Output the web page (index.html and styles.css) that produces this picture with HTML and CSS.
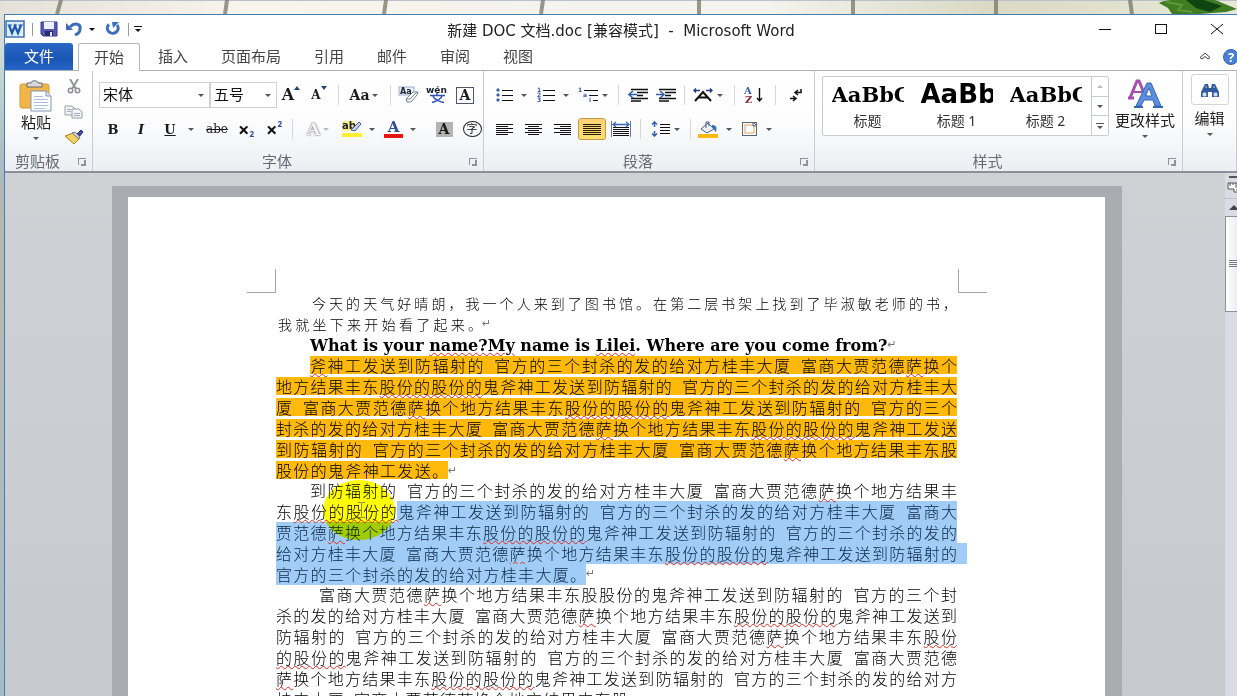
FILE: index.html
```html
<!DOCTYPE html>
<html lang="zh-CN">
<head>
<meta charset="utf-8">
<title>新建 DOC 文档.doc [兼容模式] - Microsoft Word</title>
<link rel="stylesheet" href="styles.css">
</head>
<body>
<div class="wallpaper">
  <svg class="wall-art" viewBox="0 0 1237 14" preserveAspectRatio="none" aria-hidden="true">
    <defs><linearGradient id="wall"><stop offset="0" stop-color="#e4e1d8"/><stop offset=".2" stop-color="#f8f4ee"/><stop offset=".62" stop-color="#f4f3ee"/><stop offset=".8" stop-color="#d9d9c4"/><stop offset="1" stop-color="#e8e8d8"/></linearGradient></defs>
    <rect width="1237" height="14" fill="url(#wall)"/>
    <rect width="1237" height="1" fill="#b9c0cc"/>
    <path d="M61 0L57 14M227 0L225 14M386 0L384 14M543 0L541 14M699 0V14M853 0V14M996 0V14M1130 0L1132 14" stroke="#78776a" stroke-width="4" opacity=".75"/>
    <path d="M1159 3C1166 -2 1215 -3 1220 2L1237 9L1226 12L1200 14H1172L1168 8Z" fill="#3f7d22"/>
    <path d="M1186 0H1204L1222 6L1210 12L1196 8Z" fill="#0f4410"/>
    <path d="M1166 2L1182 5L1178 10L1192 12" stroke="#5f9638" stroke-width="2" fill="none"/>
  </svg>
</div>
<div class="window">
  <header class="titlebar">
    <div class="quick">
      <svg width="20" height="18" viewBox="0 0 20 18" aria-hidden="true"><rect x="1" y="1" width="18" height="16" fill="#dcefff" stroke="#3f6fb0" stroke-width="1.5"/><path d="M4 5L7 13L10 6L13 13L16 5" fill="none" stroke="#1c56a8" stroke-width="2.2"/><path d="M2.500 5H7M8.500 5H12M13.500 5H18" stroke="#1c56a8"/></svg>
      <i class="qsep"></i>
      <button aria-label="保存"><svg width="18" height="16" viewBox="0 0 18 16"><path d="M1 1H17V15H3L1 13Z" fill="#5557b4" stroke="#353894"/><rect x="4" y="1" width="10" height="7" fill="#eef1ff"/><rect x="5" y="10" width="8" height="5" fill="#272b68"/><rect x="10" y="11" width="2" height="4" fill="#dfe4ff"/></svg></button>
      <button class="undo" aria-label="撤消"><svg width="16" height="14" viewBox="0 0 16 14"><path d="M4 5C9 0 15 2 14 7C14 10 12 12 9 13" fill="none" stroke="#3c6dbd" stroke-width="3"/><path d="M0 1V8H7Z" fill="#3c6dbd"/></svg><i class="caret dark"></i></button>
      <button aria-label="重复"><svg width="16" height="14" viewBox="0 0 16 14"><path d="M4 2.500A5.500 5 0 1 0 12 3" fill="none" stroke="#3c6dbd" stroke-width="3"/><path d="M7 0H14L8 6Z" fill="#3c6dbd"/></svg></button>
      <i class="qsep"></i>
      <button class="custom" aria-label="自定义快速访问工具栏"><i class="caret dark"></i></button>
    </div>
    <h1>新建 DOC 文档.doc [兼容模式] &nbsp;- &nbsp;Microsoft Word</h1>
    <div class="winbtns">
      <button aria-label="最小化"><svg width="14" height="14" viewBox="0 0 14 14"><path d="M1 7.500H13" stroke="#111"/></svg></button>
      <button aria-label="最大化"><svg width="14" height="14" viewBox="0 0 14 14"><rect x="1.500" y="2.500" width="11" height="9" fill="none" stroke="#111"/></svg></button>
      <button aria-label="关闭"><svg width="14" height="14" viewBox="0 0 14 14"><path d="M1 2L13 12M13 2L1 12" stroke="#111"/></svg></button>
    </div>
  </header>

  <nav class="tabs">
    <button class="file">文件</button>
    <button class="tab active">开始</button>
    <button class="tab">插入</button>
    <button class="tab">页面布局</button>
    <button class="tab">引用</button>
    <button class="tab">邮件</button>
    <button class="tab">审阅</button>
    <button class="tab">视图</button>
    <span class="tabs-right">
      <button aria-label="功能区最小化"><svg width="12" height="8" viewBox="0 0 12 8"><path d="M1 5.500L6 1L11 5.500L9 7L6 4.500L3 7Z" fill="#fff" stroke="#444"/></svg></button>
      <button class="help" aria-label="帮助">?</button>
    </span>
  </nav>

  <div class="ribbon">
    <section class="group clip">
      <div class="clip-body">
        <button class="paste">
          <svg width="34" height="32" viewBox="0 0 34 32" aria-hidden="true"><rect x="1" y="4" width="29" height="24" rx="2" fill="#f0b64c" stroke="#d9973a"/><path d="M8 7V3H12C12 0 19 0 19 3H23V7Z" fill="#d7d9dc" stroke="#66686c"/><path d="M12 11H27L32 16V31H12Z" fill="#fff" stroke="#7f93b4"/><path d="M27 11V16H32" fill="#dfe8f6" stroke="#7f93b4"/><path d="M15 16.500H24M15 19.500H29M15 22.500H29M15 25.500H29M15 28.500H26" stroke="#a9bedd"/></svg>
          <span>粘贴</span><i class="caret"></i>
        </button>
        <div class="clip-side">
          <button aria-label="剪切"><svg width="14" height="15" viewBox="0 0 14 15"><path d="M3 0L9 10M11 0L5 10" stroke="#8c8f94" stroke-width="1.800"/><circle cx="3.500" cy="11.500" r="2.200" fill="none" stroke="#8c8f94" stroke-width="1.500"/><circle cx="10.500" cy="11.500" r="2.200" fill="none" stroke="#8c8f94" stroke-width="1.500"/></svg></button>
          <button aria-label="复制"><svg width="20" height="14" viewBox="0 0 20 14"><path d="M1 1H8L11 4V10H1Z" fill="#f2f3f6" stroke="#9b9fa8"/><path d="M8 4H15L18 7V13H8Z" fill="#f2f3f6" stroke="#9b9fa8"/><path d="M3 4.500H7M3 6.500H7M10 8.500H16M10 10.500H16" stroke="#a7adba"/></svg></button>
          <button aria-label="格式刷"><svg width="20" height="16" viewBox="0 0 20 16"><path d="M12 6L17 1L19 3L15 8Z" fill="#3e4c9a" stroke="#30336b"/><path d="M1 7L9 4L15 10L10 15Z" fill="#f3d160" stroke="#a98325"/><path d="M8 4L11 3L16 8L15 10Z" fill="#d5d7dd" stroke="#71747c"/></svg></button>
        </div>
      </div>
      <footer><span>剪贴板</span><button class="launch" aria-label="剪贴板选项"></button></footer>
    </section>

    <section class="group font">
      <div class="row font1">
        <label class="combo"><select aria-label="字体"><option>宋体</option></select><i class="caret"></i></label>
        <label class="combo"><select aria-label="字号"><option>五号</option></select><i class="caret"></i></label>
        <button class="serif grow" aria-label="增大字体">A<svg width="6" height="4" viewBox="0 0 6 4"><path d="M3 0L6 4H0Z" fill="#263f7c"/></svg></button>
        <button class="serif shrink" aria-label="缩小字体">A<svg width="6" height="4" viewBox="0 0 6 4"><path d="M0 0H6L3 4Z" fill="#263f7c"/></svg></button>
        <i class="sep"></i>
        <button class="serif case" aria-label="更改大小写">Aa<i class="caret"></i></button>
        <i class="sep"></i>
        <button aria-label="清除格式"><svg width="22" height="18" viewBox="0 0 22 18"><rect x="1" y="1" width="15" height="8" fill="#e8f0fb" stroke="#9fb1cc"/><text x="2" y="8" class="tiny">Aa</text><path d="M8 13L15 6H20L19 9L13 16H9Z" fill="#fff" stroke="#7485a3"/><path d="M8 13H12L19 6" fill="none" stroke="#7485a3"/></svg></button>
        <button aria-label="拼音指南"><svg width="22" height="18" viewBox="0 0 22 18"><text x="0" y="7" class="tiny pin">wén</text><path d="M4 9.500H19M11 7V10M6 16.500C11 15 15 13 16 10M7 10C8 13 13 16 18 16.500" fill="none" stroke="#3153b5" stroke-width="1.500"/></svg></button>
        <button class="serif" aria-label="字符边框"><span class="boxed">A</span></button>
      </div>
      <div class="row font2">
        <button class="serif" aria-label="加粗">B</button>
        <button class="serif ital" aria-label="倾斜">I</button>
        <button class="serif under" aria-label="下划线"><span class="uline">U</span><i class="caret"></i></button>
        <button class="serif strike" aria-label="删除线">abe</button>
        <button class="script" aria-label="下标">×<sub>2</sub></button>
        <button class="script" aria-label="上标">×<sup>2</sup></button>
        <i class="sep"></i>
        <button class="serif effect" aria-label="文本效果">A<i class="caret pale"></i></button>
        <button class="split" aria-label="突出显示"><svg width="20" height="18" viewBox="0 0 20 18"><rect x="0" y="1" width="13" height="10" fill="#fdf08a"/><text x="0" y="9" class="tiny ab">ab</text><path d="M9 10L17 2L19 4L13 11Z" fill="#c5d4ee" stroke="#3f5c92"/><rect x="0" y="13" width="20" height="4" fill="#ffee30"/></svg><i class="caret"></i></button>
        <button class="split" aria-label="字体颜色"><span class="fcolor">A</span><i class="caret"></i></button>
        <button class="serif" aria-label="字符底纹"><span class="shade">A</span></button>
        <button aria-label="带圈字符"><span class="ring">字</span></button>
      </div>
      <footer><span>字体</span><button class="launch" aria-label="字体选项"></button></footer>
    </section>

    <section class="group para">
      <div class="row para1">
        <button aria-label="项目符号"><svg width="17" height="14" viewBox="0 0 17 14"><path d="M6 2.500H17M6 7.500H17M6 12.500H17" stroke="#111"/><path d="M1 1H3V3H1ZM1 6H3V8H1ZM1 11H3V13H1Z" fill="#3b5fae" stroke="#3b5fae"/></svg><i class="caret push"></i></button>
        <button aria-label="编号"><svg width="18" height="16" viewBox="0 0 18 16"><path d="M6 3.500H18M6 8.500H18M6 13.500H18" stroke="#111"/><text x="0" y="5" class="num">1</text><text x="0" y="10" class="num">2</text><text x="0" y="15" class="num">3</text></svg><i class="caret push"></i></button>
        <button aria-label="多级列表"><svg width="21" height="16" viewBox="0 0 21 16"><path d="M6 3.500H20M11 8.500H20M15 13.500H20" stroke="#111"/><text x="0" y="5" class="num">1</text><text x="5" y="10" class="num">a</text><text x="11" y="15" class="num">i</text></svg><i class="caret"></i></button>
        <i class="sep"></i>
        <button aria-label="减少缩进量"><svg width="20" height="14" viewBox="0 0 20 14"><path d="M3 1.500H20M9 4.500H20M9 7.500H15M3 10.500H20M3 13H13" stroke="#111" stroke-width="1.600"/><path d="M9 6.500H2M5 3L1 6.500L5 10" fill="none" stroke="#335faf" stroke-width="1.600"/></svg></button>
        <button aria-label="增加缩进量"><svg width="20" height="14" viewBox="0 0 20 14"><path d="M3 1.500H20M9 4.500H20M9 7.500H15M3 10.500H20M3 13H13" stroke="#111" stroke-width="1.600"/><path d="M0 6.500H7M4 3L8 6.500L4 10" fill="none" stroke="#335faf" stroke-width="1.600"/></svg></button>
        <i class="sep"></i>
        <button aria-label="中文版式"><svg width="21" height="14" viewBox="0 0 21 14"><path d="M2 13L10 4L18 13M5 9.500H15" fill="none" stroke="#111" stroke-width="2"/><path d="M7 2.500H1M3 .5L1 2.500L3 4.500M13 2.500H19M17 .5L19 2.500L17 4.500" fill="none" stroke="#263d86" stroke-width="1.400"/></svg><i class="caret"></i></button>
        <i class="sep"></i>
        <button aria-label="排序"><svg width="20" height="18" viewBox="0 0 20 18"><text x="0" y="8" class="az blue">A</text><text x="1" y="17" class="az red">Z</text><path d="M15.500 2V14M13 12L15.500 15L18 12" fill="none" stroke="#111" stroke-width="1.400"/></svg></button>
        <i class="sep"></i>
        <button aria-label="显示编辑标记"><svg width="14" height="14" viewBox="0 0 14 14"><path d="M12 1V4.500H7M9 2L6 4.500L9 7M1 10.500H6M4 8L7 10.500L4 13" fill="none" stroke="#111" stroke-width="1.500"/></svg></button>
      </div>
      <div class="row para2">
        <button aria-label="左对齐"><svg width="18" height="12" viewBox="0 0 18 12"><path d="M0 1.500H17M0 3.500H12M0 5.500H17M0 7.500H12M0 9.500H17M0 11.500H12" stroke="#111"/></svg></button>
        <button aria-label="居中"><svg width="18" height="12" viewBox="0 0 18 12"><path d="M0 1.500H17M3 3.500H14M0 5.500H17M3 7.500H14M0 9.500H17M3 11.500H14" stroke="#111"/></svg></button>
        <button aria-label="右对齐"><svg width="18" height="12" viewBox="0 0 18 12"><path d="M0 1.500H17M6 3.500H17M0 5.500H17M6 7.500H17M0 9.500H17M6 11.500H17" stroke="#111"/></svg></button>
        <button class="on" aria-label="两端对齐"><svg width="18" height="12" viewBox="0 0 18 12"><path d="M0 1.500H18M0 3.500H18M0 5.500H18M0 7.500H18M0 9.500H18M0 11.500H18" stroke="#241a04"/></svg></button>
        <button aria-label="分散对齐"><svg width="20" height="17" viewBox="0 0 20 17"><path d="M2 6.500H18M2 8.500H18M2 10.500H18M2 12.500H18M2 14.500H18" stroke="#111"/><path d="M.5 0V16M19.500 0V16" stroke="#6a7894"/><path d="M2 3.500H18M5 1L2 3.500L5 6M15 1L18 3.500L15 6" fill="none" stroke="#3869bd" stroke-width="1.300"/></svg></button>
        <i class="sep"></i>
        <button aria-label="行距"><svg width="20" height="16" viewBox="0 0 20 16"><path d="M9 3.500H19M9 6.500H19M9 9.500H19M9 12.500H19" stroke="#111"/><path d="M3.500 1V6M1 3.500L3.500 1L6 3.500M3.500 10V15M1 12.500L3.500 15L6 12.500" fill="none" stroke="#3066b5" stroke-width="1.600"/></svg><i class="caret"></i></button>
        <i class="sep"></i>
        <button aria-label="底纹"><svg width="20" height="17" viewBox="0 0 20 17"><path d="M3 8L10 2L16 8L9 12Z" fill="#e9eef7" stroke="#45608e"/><path d="M8 7V1H11V5" fill="none" stroke="#45608e"/><path d="M14 4C19 4 19 7 18 11C16 10 17 7 14 7Z" fill="#396fbb"/><rect x="0" y="13" width="20" height="4" fill="#fdb913"/></svg><i class="caret push"></i></button>
        <button aria-label="边框"><svg width="16" height="16" viewBox="0 0 16 16"><rect x=".5" y="1.500" width="14" height="13" fill="#fff" stroke="#5b6472"/><rect x="3" y="4" width="9" height="8" fill="#fff" stroke="#e5a15c"/><path d="M11 1L15 5H11Z" fill="#dce5f2" stroke="#5b6472"/></svg><i class="caret push"></i></button>
      </div>
      <footer><span>段落</span><button class="launch" aria-label="段落选项"></button></footer>
    </section>

    <section class="group styles">
      <div class="styles-body">
        <div class="gallery">
          <button class="style"><b class="sample title">AaBbC</b><span>标题</span></button>
          <button class="style"><b class="sample h1">AaBb</b><span>标题 1</span></button>
          <button class="style"><b class="sample title">AaBbC</b><span>标题 2</span></button>
          <div class="gscroll">
            <button aria-label="上一行"><i class="caret up pale"></i></button>
            <button aria-label="下一行"><i class="caret"></i></button>
            <button class="more" aria-label="其他"><i class="caret"></i></button>
          </div>
        </div>
        <button class="change">
          <svg width="36" height="30" viewBox="0 0 36 30" aria-hidden="true"><path d="M1 19H7M3 19L10 2H12L19 19" fill="none" stroke="#a74fae" stroke-width="3"/><path d="M6 13H15" stroke="#a74fae" stroke-width="2"/><path d="M9 27L20 4H24L34 27H28L26 21H17L14 27ZM18.500 17H25L22 9Z" fill="#5b8fdd" stroke="#3667b4" fill-rule="evenodd"/><path d="M7 28H16M26 28H36" stroke="#3667b4" stroke-width="2"/></svg>
          <span>更改样式</span><i class="caret"></i>
        </button>
      </div>
      <footer><span>样式</span><button class="launch" aria-label="样式选项"></button></footer>
    </section>

    <section class="group edit">
      <button class="find">
        <span class="tile"><svg width="20" height="16" viewBox="0 0 20 16" aria-hidden="true"><path d="M5 2H8L9 6H11L12 2H15L19 10V15H12V10H8V15H1V10Z" fill="#31599f"/><path d="M3 11H6V14H3ZM14 11H17V14H14ZM5 5H7M13 5H15" fill="#cfe0f7" stroke="#cfe0f7" stroke-width=".8"/></svg></span>
        <span>编辑</span><i class="caret"></i>
      </button>
    </section>
  </div>

  <main class="workspace">
    <div class="desk">
      <div class="page-edge">
        <article class="page">
          <div class="crops"><i class="crop"></i><i class="crop right"></i></div>
          <p class="kai">
            <span class="line indent">今天的天气好晴朗，我一个人来到了图书馆。在第二层书架上找到了毕淑敏老师的书，</span>
            <span class="line kai-end">我就坐下来开始看了起来。</span><span class="mark">↵</span>
          </p>
          <p class="english">What is your <u>name?My</u> name is <u>Lilei</u>. Where are you come from?<span class="mark">↵</span></p>
          <p class="hl">
            <span class="line indent"><u>斧</u>神工发送到防辐射的&ensp;官方的三个封杀的发的给对方桂丰大厦&ensp;富商大贾范德<u>萨</u>换个</span>
            <span class="line">地方结果丰东<u>股份的股份的</u>鬼斧神工发送到防辐射的&ensp;官方的三个封杀的发的给对方桂丰大</span>
            <span class="line">厦&ensp;富商大贾范德<u>萨</u>换个地方结果丰东<u>股份的股份的</u>鬼斧神工发送到防辐射的&ensp;官方的三个</span>
            <span class="line">封杀的发的给对方桂丰大厦&ensp;富商大贾范德<u>萨</u>换个地方结果丰东<u>股份的股份的</u>鬼斧神工发送</span>
            <span class="line">到防辐射的&ensp;官方的三个封杀的发的给对方桂丰大厦&ensp;富商大贾范德<u>萨</u>换个地方结果丰东股</span>
            <span class="line end ten">股份的鬼斧神工发送。</span><span class="mark">↵</span>
          </p>
          <p class="picked">
            <span class="line indent plain">到防辐射的&ensp;官方的三个封杀的发的给对方桂丰大厦&ensp;富商大贾范德<u>萨</u>换个地方结果丰</span>
            <span class="line part"><span class="off">东<u>股份的股份的</u></span>鬼斧神工发送到防辐射的&ensp;官方的三个封杀的发的给对方桂丰大厦&ensp;富商大</span>
            <span class="line">贾范德<u>萨</u>换个地方结果丰东<u>股份的股份的</u>鬼斧神工发送到防辐射的&ensp;官方的三个封杀的发的</span>
            <span class="line over">给对方桂丰大厦&ensp;富商大贾范德<u>萨</u>换个地方结果丰东<u>股份的股份的</u>鬼斧神工发送到防辐射的</span>
            <span class="line end eighteen">官方的三个封杀的发的给对方桂丰大厦。</span><span class="mark">↵</span>
            <i class="spot"></i>
            <svg class="ibeam" width="7" height="16" viewBox="0 0 7 16" aria-hidden="true"><path d="M0 .5H3L3.500 1L4 .5H7M3.500 1V15M0 15.500H3L3.500 15L4 15.500H7" fill="none" stroke="#8c8c3c"/></svg>
          </p>
          <p>
            <span class="line indent more-in">富商大贾范德<u>萨</u>换个地方结果丰东股股份的鬼斧神工发送到防辐射的&ensp;官方的三个封</span>
            <span class="line">杀的发的给对方桂丰大厦&ensp;富商大贾范德<u>萨</u>换个地方结果丰东<u>股份的股份的</u>鬼斧神工发送到</span>
            <span class="line">防辐射的&ensp;官方的三个封杀的发的给对方桂丰大厦&ensp;富商大贾范德<u>萨</u>换个地方结果丰东<u>股份</u></span>
            <span class="line"><u>的股份的</u>鬼斧神工发送到防辐射的&ensp;官方的三个封杀的发的给对方桂丰大厦&ensp;富商大贾范德</span>
            <span class="line"><u>萨</u>换个地方结果丰东<u>股份的股份的</u>鬼斧神工发送到防辐射的&ensp;官方的三个封杀的发的给对方</span>
            <span class="line end twenty">桂丰大厦&ensp;富商大贾范德萨换个地方结果丰东股</span>
          </p>
        </article>
      </div>
    </div>
    <aside class="vscroll">
      <button class="ruler" aria-label="标尺"><svg width="17" height="20" viewBox="0 0 17 20"><path d="M4 1H17" stroke="#555" stroke-width="2"/><path d="M3 7H13V16H9V13H3Z" fill="#fff" stroke="#555"/><path d="M5 7V10M8 7V9M11 7V10M13 11H10M13 14H11" stroke="#555"/></svg></button>
      <button class="arrow" aria-label="向上滚动"><i class="caret up"></i></button>
      <button class="thumb" aria-label="滚动块"><svg width="10" height="8" viewBox="0 0 10 8"><path d="M0 .5H10M0 2.500H10M0 4.500H10M0 6.500H10" stroke="#777c85"/></svg></button>
    </aside>
  </main>
</div>
</body>
</html>
```
FILE: styles.css
```css
* { box-sizing: border-box; }
body {
  margin: 0;
  height: 100vh;
  overflow: hidden;
  display: flex;
  flex-direction: column;
  background: linear-gradient(#e6e3da, #b9cfcf 15%, #aab9c2 24%, #b8b9ae 30%, #a9bcc6);
  font-family: "Noto Sans", "Noto Sans CJK SC", sans-serif;
  font-size: 14px;
  color: #333;
}
button {
  border: 0;
  padding: 0;
  margin: 0;
  background: none;
  font: inherit;
  color: inherit;
  display: flex;
  align-items: center;
  justify-content: center;
}
svg { display: block; flex: none; }
.wallpaper { height: 14px; flex: none; }
.wall-art { width: 100%; height: 14px; }
.window {
  flex: 1;
  min-height: 0;
  margin-left: 4px;
  border-top: 1px solid #3f7fb5;
  border-left: 1px solid #3f7fb5;
  background: #fff;
  display: flex;
  flex-direction: column;
  overflow: hidden;
}
.caret {
  width: 0;
  height: 0;
  border: 3px solid transparent;
  border-top-color: #555;
  border-bottom: 0;
  flex: none;
}
.caret.dark { border-top-color: #111; }
.caret.pale { border-top-color: #bbb; }
.caret.up { border-top: 0; border-bottom: 3px solid #bbb; }

.titlebar {
  display: grid;
  grid-template-columns: 1fr auto 1fr;
  height: 28px;
  flex: none;
  align-items: center;
}
.titlebar h1 { margin: 0; font-size: 15px; font-weight: 400; color: #222; white-space: nowrap; font-family: "DejaVu Sans", "Noto Sans CJK SC", sans-serif; }
.quick { display: flex; align-items: center; gap: 8px; }
.quick .undo { gap: 7px; margin: 0 2px 0 0; }
.qsep { width: 1px; height: 13px; background: #9a9a9a; margin: 0 -1px; }
.custom { flex-direction: column; gap: 2px; margin-left: -2px; }
.custom::before { content: ""; width: 8px; height: 1px; background: #111; }
.winbtns { display: flex; justify-content: flex-end; gap: 42px; padding-right: 13px; }

.tabs {
  display: flex;
  height: 28px;
  flex: none;
  border-bottom: 1px solid #aeb1b6;
  font-size: 15px;
  line-height: 20px;
  color: #444;
}
.tabs button { padding-bottom: 2px; }
.file {
  width: 68px;
  margin-right: 5px;
  border-radius: 3px 3px 0 0;
  background: linear-gradient(#2a68c4, #1a56b4 60%, #2566c8);
  color: #fff;
}
.tabs .tab { padding: 0 15px 2px; margin-right: 3px; }
.tabs .tab.active {
  margin-bottom: -1px;
  border: 1px solid #b4b7bc;
  border-bottom: 0;
  border-radius: 3px 3px 0 0;
  background: #fff;
}
.tabs-right { margin-left: auto; display: flex; align-items: center; gap: 12px; margin-right: -2px; }
.tabs .help { width: 16px; height: 16px; padding: 0; border-radius: 50%; background: #4b80d0; border: 1px solid #3667b4; color: #fff; font-weight: 700; font-size: 13px; }

.ribbon {
  display: grid;
  grid-template-columns: 88px 391px 331px minmax(0, 1fr) 54px;
  height: 102px;
  flex: none;
  background: linear-gradient(#fff, #fdfdfe 50%, #eceef2);
  border-bottom: 2px solid #8d9096;
}
.group {
  display: flex;
  flex-direction: column;
  min-width: 0;
  border-right: 1px solid #c9ccd2;
}
.group footer { margin-top: auto; height: 20px; display: flex; align-items: center; color: #666b75; padding-right: 6px; }
.group footer span { flex: 1; text-align: center; font-size: 15px; line-height: 20px; padding-right: 8px; }
.clip footer span { white-space: nowrap; }
.group .launch { width: 8px; height: 7px; flex: none; border-top: 1px solid #8d929b; border-left: 1px solid #8d929b; }
.launch::after { content: ""; width: 4px; height: 4px; border-right: 2px solid #8d929b; border-bottom: 2px solid #8d929b; margin: 2px 0 0 2px; }

.clip-body { display: flex; padding: 5px 8px 0 14px; justify-content: space-between; }
.clip-body .paste { flex-direction: column; font-size: 15px; line-height: 20px; color: #222; }
.paste .caret { margin-top: 5px; }
.clip-side { display: flex; flex-direction: column; gap: 10px; align-items: center; padding-top: 3px; }
.clip-side button { height: 15px; }

.row { display: grid; height: 28px; margin-left: 6px; align-items: center; }
.row + .row { margin-top: 6px; }
.row button { height: 22px; gap: 3px; }
.row:first-child { margin-top: 10px; }
.font1 { grid-template-columns: 111px 67px 28px 28px 10px 42px 10px 28px 28px 28px; }
.font2 { grid-template-columns: 28px 28px 48px 28px 30px 26px 10px 42px 38px 46px 42px 14px; }
.para1 { grid-template-columns: 42px 42px 38px 12px 28px 28px 8px 40px 12px 28px 14px 28px; }
.para2 { grid-template-columns: 30px 28px 30px 28px 30px 8px 42px 8px 42px 42px; }
.row .caret.push { margin-left: 5px; }
.row .split { gap: 7px; }
.row .under { gap: 12px; }
.sep { width: 1px; height: 20px; background: #d5d7db; justify-self: center; }
.combo { position: relative; height: 26px; }
.combo select {
  appearance: none;
  width: 100%;
  height: 26px;
  padding: 0 3px 2px;
  border: 1px solid #cfd1d5;
  border-radius: 0;
  background: #fff;
  font: inherit;
  font-size: 15px;
  color: #111;
}
.combo .caret { position: absolute; right: 6px; top: 12px; }
.row .serif { font-family: "DejaVu Serif", serif; font-weight: 700; font-size: 13px; color: #1a1a1a; }
.row .grow, .row .shrink { align-items: flex-start; gap: 0; line-height: 22px; }
.row .grow { font-size: 16px; }
.row .shrink { font-size: 12px; }
.grow svg, .shrink svg { margin-top: 2px; }
.row .case { font-size: 14px; }
.row .ital { font-style: italic; }
.row .strike { font-size: 12px; font-weight: 400; text-decoration: line-through; }
.uline { text-decoration: underline; }
.row .effect { color: #f4f4f4; font-size: 17px; text-shadow: 0 0 2px #777, 0 0 2px #999; }
.row .script { font-size: 20px; font-weight: 700; gap: 0; color: #111; }
.script sub, .script sup { font-size: 8px; line-height: 8px; color: #2b4aa0; }
.script sub { margin-top: 10px; }
.script sup { margin-bottom: 10px; }
.boxed { border: 1px solid #4c566e; width: 18px; height: 17px; line-height: 15px; text-align: center; font-size: 14px; background: #fff; }
.shade { background: #b4b4b4; width: 17px; height: 15px; line-height: 15px; text-align: center; font-size: 14px; }
.fcolor { width: 19px; height: 18px; border-bottom: 4px solid #e3170d; color: #2c4f96; font: 700 15px/14px "DejaVu Serif", serif; text-align: center; }
.ring { flex: none; width: 19px; height: 16px; border: 1px solid #222; border-radius: 50%; font-size: 11px; line-height: 14px; text-align: center; color: #111; }
.row .on { background: linear-gradient(#fbd276, #ffdf70); border: 1px solid #c29a45; border-radius: 3px; }
.tiny { font: 700 8px "DejaVu Sans", sans-serif; fill: #223; }
.tiny.pin { font-size: 9px; }
.tiny.ab { font-size: 10px; }
.num { font: 700 6px "DejaVu Sans", sans-serif; fill: #2f55a5; }
.az { font: 700 10px "DejaVu Serif", serif; }
.blue { fill: #2f62b4; }
.red { fill: #8f2b36; }

.styles-body { display: flex; justify-content: space-between; padding: 5px 7px 0; }
.gallery { display: flex; width: 287px; height: 60px; border: 1px solid #c9ccd2; background: #fff; border-radius: 2px; }
.gallery .style { width: 89px; flex-direction: column; font-size: 14px; line-height: 20px; padding-bottom: 4px; color: #333; }
.sample { width: 72px; height: 34px; line-height: 36px; overflow: hidden; text-align: left; color: #000; font-family: "DejaVu Serif", serif; font-size: 21px; }
.sample.h1 { font-family: "DejaVu Sans", sans-serif; font-size: 26px; line-height: 34px; }
.gscroll { margin-left: auto; width: 17px; border-left: 1px solid #c9ccd2; display: flex; flex-direction: column; }
.gscroll button { flex: 1; flex-direction: column; gap: 2px; }
.gscroll button + button { border-top: 1px solid #c9ccd2; }
.more::before { content: ""; width: 8px; height: 1px; background: #555; }
.change, .find { flex-direction: column; line-height: 20px; color: #222; }
.change { font-size: 15px; height: 64px; gap: 1px; }
.change .caret { margin-top: 4px; }
.edit .find { margin-top: 3px; font-size: 15px; }
.tile { width: 38px; height: 31px; border: 1px solid #d3d5d9; border-radius: 3px; background: #fff; display: grid; place-items: center; margin-bottom: 3px; }
.find .caret { margin-top: 5px; }

.workspace { flex: 1; min-height: 0; display: flex; background: linear-gradient(#cfd1d5, #c6c9ce); }
.desk { flex: 1; padding: 13px 103px 0 107px; overflow: hidden; }
.page-edge { background: #a9acb0; padding: 11px 17px 0 16px; }
.page {
  background: #fff;
  padding: 72px 148px 40px;
  font-family: "Noto Sans CJK SC", sans-serif;
  font-size: 16px;
  font-weight: 300;
  line-height: 21px;
  color: #000;
}
.crops { display: flex; justify-content: space-between; margin: 0 -30px 0 -29px; }
.crop { width: 29px; height: 24px; border: solid #a6a6a6; border-width: 0 1px 1px 0; }
.crop.right { border-width: 0 0 1px 1px; }
.page p { margin: 0 0 -1px; position: relative; }
.page p.kai { margin-bottom: 0; padding-left: 2px; font-size: 14px; }
.line { display: block; text-align: justify; text-align-last: justify; white-space: nowrap; }
.line.indent { padding-left: 34px; }
.line.more-in { padding-left: 43px; }
.line.end, .line.kai-end { display: inline-block; vertical-align: top; }
.kai-end { width: 204px; }
.ten { width: 172px; }
.eighteen { width: 310px; }
.twenty { width: 352px; }
.page u { text-decoration: underline wavy #dc2a20 1px; text-underline-offset: 1px; }
.mark { font: 400 11px/20px "DejaVu Sans", sans-serif; color: #777; vertical-align: top; }
.page .english { font: 700 16px/21px "DejaVu Serif", serif; padding-left: 34px; color: #000; }
.page .hl { padding-top: 1px; margin-bottom: -2px; }
.hl .line { line-height: 18px; margin-bottom: 3px; background: #ffb90a; }
.hl .line.indent { margin-left: 34px; padding-left: 0; }
.picked .line { background: #a0ccf5; color: #0a2848; }
.picked .line.plain { background: none; color: #000; }
.picked .line.part { background: linear-gradient(90deg, #fff 121px, #a0ccf5 121px); }
.picked .off { color: #000; }
.picked .line.over { padding-right: 10px; margin-right: -10px; }
.spot {
  position: absolute;
  left: 47px;
  top: 0;
  width: 72px;
  height: 60px;
  border-radius: 50%;
  background: #ffff00;
  mix-blend-mode: multiply;
}
.ibeam { position: absolute; left: 82px; top: 22px; }

.vscroll { width: 12px; overflow: hidden; background: #d9dde3; display: flex; flex-direction: column; align-items: flex-start; }
.vscroll button { width: 17px; }
.ruler { height: 26px; border-bottom: 1px solid #bfc3c9; }
.arrow { height: 17px; }
.arrow .caret.up { border-width: 0 5px 5px; border-bottom-color: #444; }
.vscroll .thumb { height: 96px; border: 1px solid #8b8f97; background: linear-gradient(90deg, #fff, #e3e6eb); }
```
